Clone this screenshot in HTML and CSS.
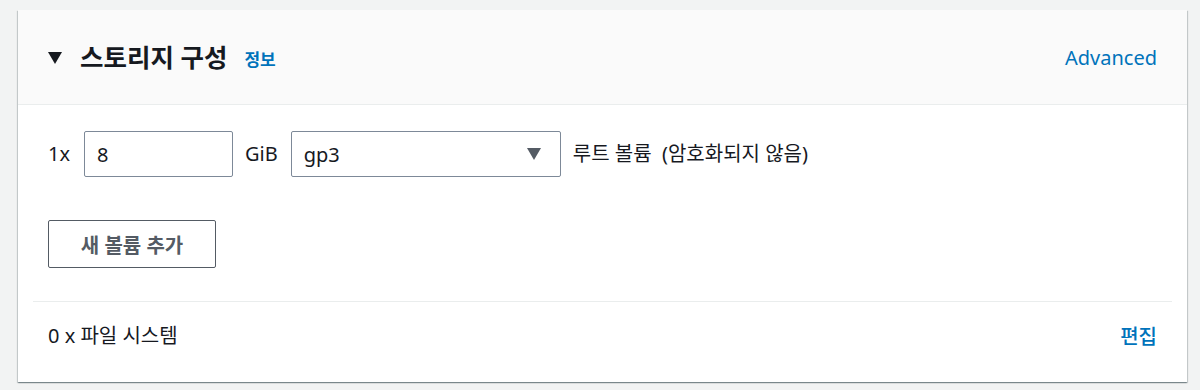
FILE: index.html
```html
<!DOCTYPE html>
<html lang="ko">
<head>
<meta charset="utf-8">
<link rel="stylesheet" href="styles.css">
</head>
<body>
<div class="card">
  <div class="card-header">
    <svg class="caret" width="14" height="12" viewBox="0 0 14 12"><polygon points="0,0 14,0 7,12" fill="#16191f"/></svg>
    <h2 class="title">스토리지 구성</h2>
    <a class="info">정보</a>
    <a class="advanced">Advanced</a>
  </div>
  <div class="card-body">
    <div class="volume-row">
      <span class="txt">1x</span>
      <div class="input size-input">8</div>
      <span class="txt">GiB</span>
      <div class="input select-input">
        <span>gp3</span>
        <svg width="14" height="12" viewBox="0 0 14 12"><polygon points="0,0 14,0 7,12" fill="#545b64"/></svg>
      </div>
      <span class="txt">루트 볼륨&nbsp; (암호화되지 않음)</span>
    </div>
    <button class="btn">새 볼륨 추가</button>
    <div class="divider"></div>
    <div class="footer-row">
      <span class="txt">0 x 파일 시스템</span>
      <a class="edit">편집</a>
    </div>
  </div>
</div>
</body>
</html>
```
FILE: styles.css
```css
* { box-sizing: border-box; }
html, body { margin: 0; }
body {
  background: #f2f3f3;
  padding: 10px 13px 8px 18px;
  font-family: "Noto Sans", "Noto Sans CJK KR", sans-serif;
  color: #16191f;
}
.card {
  background: #fff;
  height: 372px;
  box-shadow: 0 1px 1px 0 rgba(0,28,36,0.3), 1px 1px 1px 0 rgba(0,28,36,0.15), -1px 1px 1px 0 rgba(0,28,36,0.15);
}
.card-header {
  height: 95px;
  background: #fafafa;
  border-bottom: 1px solid #eaeded;
  display: flex;
  align-items: center;
  padding: 0 30px;
}
.caret { margin-top: 2px; }
.title {
  margin: 0 0 0 18px;
  font-size: 25.5px;
  font-weight: 700;
  line-height: 32px;
}
.info {
  margin-left: 17px;
  font-size: 17px;
  font-weight: 700;
  color: #0073bb;
  margin-top: 3px;
}
.advanced {
  margin-left: auto;
  font-size: 20px;
  color: #0073bb;
}
.card-body {
  padding: 26px 30px 0;
}
.volume-row {
  display: flex;
  align-items: center;
  height: 46px;
}
.txt {
  font-size: 20px;
  line-height: 26px;
}
.input {
  height: 46px;
  border: 1px solid #7d8998;
  border-radius: 2px;
  display: flex;
  align-items: center;
  padding: 0 12px;
  font-size: 20px;
}
.size-input {
  width: 149px;
  margin: 0 12px 0 14px;
}
.select-input {
  width: 270px;
  margin: 0 12px 0 13px;
  justify-content: space-between;
  padding-right: 19px;
}
.btn {
  display: block;
  margin-top: 43px;
  width: 168px;
  height: 48px;
  border: 1px solid #545b64;
  border-radius: 2px;
  background: #fff;
  color: #545b64;
  font-family: inherit;
  font-size: 20px;
  font-weight: 700;
  padding: 0;
}
.divider {
  margin: 33px -15px 0;
  border-top: 1px solid #eaeded;
}
.footer-row {
  display: flex;
  align-items: center;
  justify-content: space-between;
  padding-top: 19px;
}
.edit {
  font-size: 20px;
  font-weight: 500;
  color: #0073bb;
}
```
